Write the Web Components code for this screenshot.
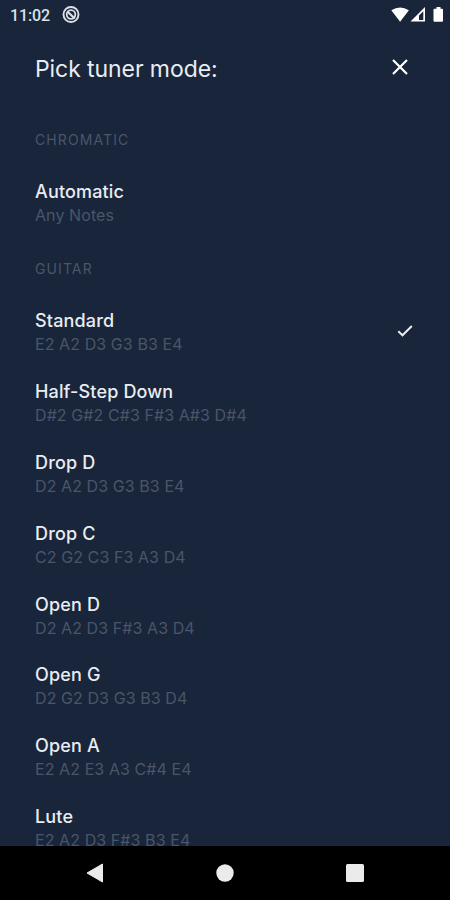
<!DOCTYPE html>
<html lang="en">
<head>
<meta charset="utf-8">
<title>Tuner mode</title>
<style>
html,body{margin:0;height:100%;background:#19253b}
body{font-family:Inter,Roboto,sans-serif;color:#e9ecf0;overflow:hidden}
</style>
</head>
<body>
<tuner-screen></tuner-screen>
<script>
const define = (name, html, setup) => {
  const template = document.createElement('template');
  template.innerHTML = html;
  customElements.define(name, class extends HTMLElement {
    constructor() {
      super();
      this.attachShadow({ mode: 'open' }).append(template.content.cloneNode(true));
    }
    connectedCallback() { if (setup) setup(this, this.shadowRoot); }
  });
};

define('status-bar', `
<style>
:host{display:flex;align-items:center;height:30px;flex:none;padding:0 6px 0 10px;box-sizing:border-box;font:500 16px/30px Roboto,sans-serif;color:#dde1e7}
svg{display:block}
.app{margin-left:11px;margin-right:auto}
.time{width:41px;white-space:nowrap;padding-top:1px;letter-spacing:-.1px}
</style>
<span class="time">11:02</span>
<svg class="app" width="18" height="18" viewBox="0 0 18 18" fill="none" stroke="#dde1e7"><circle cx="9" cy="8.500" r="7.500" stroke-width="1.900"/><circle cx="9" cy="8.500" r="4.300" stroke-width="1.800"/><path d="M5.600 5.700 12.800 12.500" stroke-width="2.200"/></svg>
<svg width="53" height="18" viewBox="0 0 53 18"><path d="M.3 4.300Q9.100-1.500 17.900 4.300L9.100 15.700Z" fill="#fff"/><path d="M34 1v14.500H19.500Z" fill="#fff"/><path d="M32.300 5.200v8.800h-4.300V9.500Z" fill="#19253b"/><path d="M43.500 2.800h2V1h4v1.800h1.500q1 0 1 1v11q0 1-1 1h-7.500q-1 0-1-1v-11q0-1 1-1Z" fill="#fff"/></svg>
`);

define('mode-header', `
<style>
:host{display:flex;align-items:center;justify-content:space-between;height:76px;flex:none;padding:0 42px 0 35px}
h1{margin:1px 0 0;font-size:23px;font-weight:400;line-height:30px;letter-spacing:-.080px;white-space:nowrap}
svg{display:block;margin-bottom:2px}
</style>
<h1><slot></slot></h1>
<svg width="16" height="16" viewBox="0 0 16 16" fill="none" stroke="#fff" stroke-width="2.200"><path d="M1 1 15 15M15 1 1 15"/></svg>
`);

define('mode-section', `
<style>
:host{display:block;padding:0 37px 0 35px}
h2{margin:0 0 29px;height:20px;font-size:14px;font-weight:400;line-height:20px;letter-spacing:1.100px;color:#4a5567}
div{display:flex;flex-direction:column;gap:22.860px}
</style>
<h2></h2><div><slot></slot></div>
`, (el, root) => { root.querySelector('h2').textContent = el.getAttribute('label'); });

define('mode-item', `
<style>
:host{display:flex;align-items:center;justify-content:space-between;height:48px;flex:none}
.name,.notes{display:block;white-space:nowrap}
.name{height:25px;line-height:25px;font-size:18px;font-weight:450;letter-spacing:.150px}
.notes{height:23px;line-height:22px;font-size:16px;letter-spacing:.080px;color:#4a5567}
svg{display:none;margin-bottom:2px}
:host([selected]) svg{display:block}
</style>
<div><span class="name"><slot></slot></span><span class="notes"></span></div>
<svg width="16" height="14" viewBox="0 0 16 14" fill="none" stroke="#e9ecf0" stroke-width="2"><path d="M1.300 7.300 5.500 11.300 14.800 2"/></svg>
`, (el, root) => { root.querySelector('.notes').textContent = el.getAttribute('notes'); });

define('nav-bar', `
<style>
:host{display:grid;grid-template-columns:repeat(3,130px);justify-content:center;align-items:center;justify-items:center;height:54px;flex:none;background:#000}
svg{display:block}
</style>
<svg width="20" height="22" viewBox="0 0 20 22"><path d="M17.500 2v18L2 11Z" fill="#ebebeb" stroke="#ebebeb" stroke-linejoin="round"/></svg>
<svg width="18" height="18"><circle cx="9" cy="9" r="8.700" fill="#ebebeb"/></svg>
<svg width="20" height="20"><rect x="1" y="1" width="18" height="18" rx="1.500" fill="#ebebeb"/></svg>
`);

define('tuner-screen', `
<style>
:host{display:flex;flex-direction:column;height:900px;width:450px;background:#19253b;overflow:hidden}
main{flex:1;min-height:0;overflow:hidden;display:flex;flex-direction:column;gap:32.700px;padding-top:23.500px}
mode-section{flex:none}
</style>
<status-bar></status-bar>
<mode-header>Pick tuner mode:</mode-header>
<main>
<mode-section label="CHROMATIC"><mode-item notes="Any Notes">Automatic</mode-item></mode-section>
<mode-section label="GUITAR">
<mode-item selected notes="E2 A2 D3 G3 B3 E4">Standard</mode-item>
<mode-item notes="D#2 G#2 C#3 F#3 A#3 D#4">Half-Step Down</mode-item>
<mode-item notes="D2 A2 D3 G3 B3 E4">Drop D</mode-item>
<mode-item notes="C2 G2 C3 F3 A3 D4">Drop C</mode-item>
<mode-item notes="D2 A2 D3 F#3 A3 D4">Open D</mode-item>
<mode-item notes="D2 G2 D3 G3 B3 D4">Open G</mode-item>
<mode-item notes="E2 A2 E3 A3 C#4 E4">Open A</mode-item>
<mode-item notes="E2 A2 D3 F#3 B3 E4">Lute</mode-item>
</mode-section>
</main>
<nav-bar></nav-bar>
`);
</script>
</body>
</html>
